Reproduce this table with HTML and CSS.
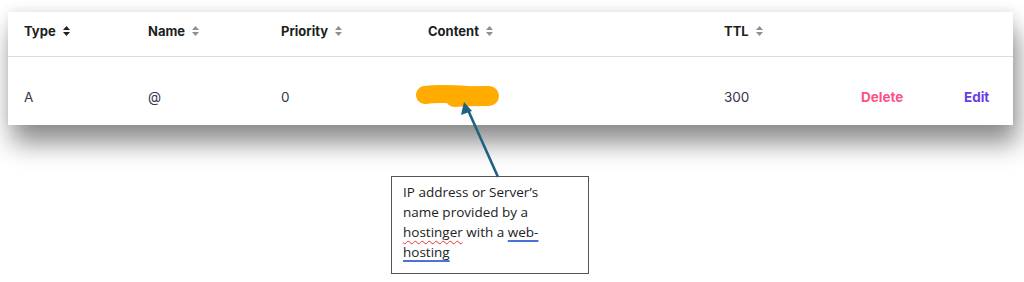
FILE: index.html
```html
<!DOCTYPE html>
<html lang="en">
<head>
  <meta charset="UTF-8" />
  <meta name="viewport" content="width=device-width, initial-scale=1.0" />
  <title>DNS records</title>
  <link rel="stylesheet" href="styles.css">
</head>
<body>

  <div class="page">
    <div class="records-card">
      <div class="records-row records-head">
        <div class="col">Type <svg class="sort active" width="7" height="10" viewBox="0 0 7 10"><path d="M3.5 0 L7 4 L0 4 Z M0 6 L7 6 L3.5 10 Z"/></svg></div>
        <div class="col">Name <svg class="sort" width="7" height="10" viewBox="0 0 7 10"><path d="M3.5 0 L7 4 L0 4 Z M0 6 L7 6 L3.5 10 Z"/></svg></div>
        <div class="col">Priority <svg class="sort" width="7" height="10" viewBox="0 0 7 10"><path d="M3.5 0 L7 4 L0 4 Z M0 6 L7 6 L3.5 10 Z"/></svg></div>
        <div class="col">Content <svg class="sort" width="7" height="10" viewBox="0 0 7 10"><path d="M3.5 0 L7 4 L0 4 Z M0 6 L7 6 L3.5 10 Z"/></svg></div>
        <div class="col">TTL <svg class="sort" width="7" height="10" viewBox="0 0 7 10"><path d="M3.5 0 L7 4 L0 4 Z M0 6 L7 6 L3.5 10 Z"/></svg></div>
        <div class="col"></div>
        <div class="col"></div>
      </div>
      <div class="records-row records-body">
        <div class="col">A</div>
        <div class="col">@</div>
        <div class="col">0</div>
        <div class="col">
          <svg class="blob" width="86" height="26" viewBox="0 0 86 26">
            <path d="M10 11 C 22 9, 38 10, 52 11" stroke="#ffab00" stroke-width="18" stroke-linecap="round" fill="none"/>
            <path d="M40 13 C 52 12, 64 12, 74 12" stroke="#ffab00" stroke-width="20" stroke-linecap="round" fill="none"/>
          </svg>
        </div>
        <div class="col">300</div>
        <div class="col"><a href="#" class="action delete">Delete</a></div>
        <div class="col"><a href="#" class="action edit">Edit</a></div>
      </div>
    </div>

    <div class="callout">
      IP address or Server’s<br>
      name provided by a<br>
      <span class="spell">hostinger</span> with a <span class="grammar">web-</span><br>
      <span class="grammar">hosting</span>
    </div>

    <!-- arrow from the callout to the content cell -->
    <svg class="pointer" width="1024" height="282" viewBox="0 0 1024 282">
      <line x1="498" y1="177" x2="468" y2="110" stroke="#1d6282" stroke-width="2.6"/>
      <polygon points="464,102 461,115 472,111" fill="#1d6282"/>
    </svg>
  </div>

</body>
</html>
```

FILE: styles.css
```css
* {
  box-sizing: border-box;
}

body {
  margin: 0;
  padding: 0;
  background: #fff;
  font-family: Inter, "DejaVu Sans", sans-serif;
}

.page {
  position: relative;
  width: 1024px;
  height: 282px;
  padding: 12px 0 0 8px;
  overflow: hidden;
}

.records-card {
  width: 1005px;
  background: #fff;
  box-shadow: 4px 18px 24px rgba(0, 0, 0, 0.45), 0 -2px 10px rgba(0, 0, 0, 0.08);
}

.records-row {
  display: grid;
  grid-template-columns: 124px 133px 147px 296px 137px 103px 1fr;
  padding-left: 16px;
}

.records-head {
  height: 45px;
  padding-top: 10px;
  border-bottom: 1px solid #dadce0;
  font-weight: 700;
  font-size: 13px;
  color: #1d1e20;
}

.records-body {
  height: 68px;
  padding-top: 31px;
  font-size: 13.5px;
  color: #36344d;
}

.col {
  display: flex;
  align-items: center;
  height: 18px;
  white-space: nowrap;
}

.sort {
  margin-left: 7px;
  fill: #8c8f99;
}

.sort.active {
  fill: #1d1e20;
}

.blob {
  margin-left: -13px;
}

.action {
  font-weight: 700;
  text-decoration: none;
}

.delete {
  color: #fc5185;
}

.edit {
  color: #673de6;
}

.callout {
  width: 198px;
  height: 98px;
  margin: 51px 0 0 383px;
  padding: 5px 10px 0 11px;
  border: 1px solid #555;
  font-family: "Open Sans", sans-serif;
  font-size: 13.5px;
  line-height: 20px;
  color: #222;
}

.spell {
  text-decoration: underline wavy #e33;
  text-decoration-thickness: 1px;
  text-underline-offset: 3px;
}

.grammar {
  text-decoration: underline #4a72d8;
  text-decoration-thickness: 2px;
  text-underline-offset: 3px;
}

.pointer {
  position: absolute;
  top: 0;
  left: 0;
  pointer-events: none;
}
```
